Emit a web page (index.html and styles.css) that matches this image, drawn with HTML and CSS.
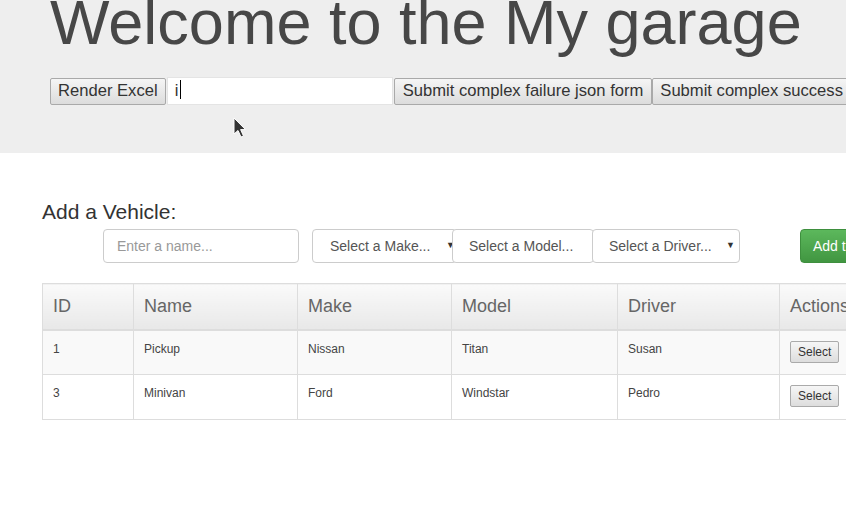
FILE: index.html
```html
<!DOCTYPE html>
<html>
<head>
<meta charset="utf-8">
<link rel="stylesheet" href="styles.css">
</head>
<body>
<div class="page">
  <header class="jumbotron">
    <h1 class="title">Welcome to the My garage</h1>
    <div class="toolbar">
      <button class="btn-plain">Render Excel</button>
      <div class="text-input">i<span class="caret"></span></div>
      <button class="btn-plain wide">Submit complex failure json form</button>
      <button class="btn-plain">Submit complex success json form</button>
    </div>
    <svg class="cursor" width="14" height="22" viewBox="0 0 14 22">
      <path d="M1 1 L1 17 L5 13.5 L8 20 L10.5 19 L7.6 12.6 L12.5 12.6 Z" fill="#333" stroke="#fff" stroke-width="1"/>
    </svg>
  </header>

  <section class="content">
    <h3 class="section-title">Add a Vehicle:</h3>
    <div class="vehicle-form">
      <div class="field name-field">Enter a name...</div>
      <div class="field select make">Select a Make...<span class="arrow">▼</span></div>
      <div class="field select model">Select a Model...</div>
      <div class="field select driver">Select a Driver...<span class="arrow">▼</span></div>
      <button class="btn-success">Add to Garage</button>
    </div>

    <table class="vehicles">
      <thead>
        <tr>
          <th class="c-id">ID</th>
          <th class="c-name">Name</th>
          <th class="c-make">Make</th>
          <th class="c-model">Model</th>
          <th class="c-driver">Driver</th>
          <th class="c-actions">Actions</th>
        </tr>
      </thead>
      <tbody>
        <tr class="odd">
          <td>1</td><td>Pickup</td><td>Nissan</td><td>Titan</td><td>Susan</td>
          <td><button class="btn-xs">Select</button></td>
        </tr>
        <tr>
          <td>3</td><td>Minivan</td><td>Ford</td><td>Windstar</td><td>Pedro</td>
          <td><button class="btn-xs">Select</button></td>
        </tr>
      </tbody>
    </table>
  </section>
</div>
</body>
</html>
```

FILE: styles.css
```css
html, body {
  margin: 0;
  padding: 0;
  background: #fff;
  overflow: hidden;
}
body {
  font-family: "Liberation Sans", Arial, sans-serif;
  color: #333;
  width: 846px;
  height: 516px;
}
.page {
  width: 1100px;
}
.jumbotron {
  position: relative;
  background: #eeeeee;
  height: 153px;
  padding-left: 50px;
  box-sizing: border-box;
}
.title {
  margin: 0;
  padding-top: 0;
  position: relative;
  top: -12px;
  font-size: 63px;
  font-weight: 400;
  line-height: 69px;
  color: #474747;
  white-space: nowrap;
}
.toolbar {
  display: flex;
  align-items: center;
  margin-top: 8px;
  height: 28px;
}
.btn-plain {
  font-family: "Liberation Sans", Arial, sans-serif;
  font-size: 16.6px;
  color: #333;
  height: 27px;
  padding: 0 7px;
  border: 1px solid #a9a9a9;
  border-radius: 2px;
  background: linear-gradient(#f5f5f5, #dcdcdc);
  white-space: nowrap;
  margin: 0;
}
.btn-plain.wide {
  padding: 0 8px;
}
.text-input {
  width: 226px;
  height: 28px;
  box-sizing: border-box;
  background: #fff;
  border: 1px solid #e4e4e4;
  font-size: 16.6px;
  line-height: 26px;
  padding-left: 7px;
  margin: 0 1px;
  color: #333;
}
.caret {
  display: inline-block;
  width: 1px;
  height: 19px;
  background: #000;
  vertical-align: -3px;
  margin-left: 2px;
}
.cursor {
  position: absolute;
  left: 233px;
  top: 117px;
}
.content {
  padding-left: 42px;
}
.section-title {
  margin: 0;
  padding-top: 47px;
  font-size: 21px;
  font-weight: 400;
  line-height: 23px;
  color: #333;
}
.vehicle-form {
  display: flex;
  align-items: center;
  margin-top: 6px;
  padding-left: 61px;
  height: 34px;
}
.field {
  box-sizing: border-box;
  height: 34px;
  border: 1px solid #ccc;
  border-radius: 4px;
  background: #fff;
  font-size: 14px;
  line-height: 32px;
  color: #555;
  position: relative;
  white-space: nowrap;
}
.name-field {
  width: 196px;
  padding-left: 13px;
  color: #999;
}
.select {
  padding-left: 17px;
}
.make {
  width: 145px;
  margin-left: 13px;
}
.model {
  width: 142px;
  margin-left: -5px;
  padding-left: 16px;
}
.driver {
  width: 148px;
  margin-left: -2px;
  padding-left: 16px;
}
.arrow {
  position: absolute;
  font-size: 9px;
  top: 0;
  line-height: 31px;
  color: #333;
}
.make .arrow { right: 1px; }
.driver .arrow { right: 4px; }
.btn-success {
  margin-left: 60px;
  height: 34px;
  padding: 0 12px;
  font-family: "Liberation Sans", Arial, sans-serif;
  font-size: 14px;
  color: #fff;
  border: 1px solid #3e8f3e;
  border-radius: 4px;
  background: linear-gradient(#5cb85c, #419641);
  white-space: nowrap;
}
.vehicles {
  margin-top: 20px;
  border-collapse: collapse;
  border: 1px solid #ddd;
  width: 1000px;
  table-layout: fixed;
}
.vehicles th, .vehicles td {
  border: 1px solid #ddd;
  text-align: left;
  vertical-align: top;
}
.vehicles th {
  font-size: 18px;
  font-weight: 400;
  color: #666;
  height: 46px;
  padding: 0 10px;
  box-sizing: border-box;
  line-height: 44px;
  border-bottom: 2px solid #ddd;
  background: linear-gradient(#fafafa, #e8e8e8);
}
.c-id { width: 91px; }
.c-name { width: 164px; }
.c-make { width: 154px; }
.c-model { width: 166px; }
.c-driver { width: 162px; }
.vehicles td {
  font-size: 12px;
  color: #444;
  height: 45px;
  box-sizing: border-box;
  padding: 10px 10px 0;
  line-height: 17px;
}
.vehicles tr.odd td {
  background: #f9f9f9;
}
.btn-xs {
  font-family: "Liberation Sans", Arial, sans-serif;
  font-size: 12px;
  color: #333;
  height: 22px;
  padding: 0 7px;
  border: 1px solid #aaa;
  border-radius: 2px;
  background: linear-gradient(#f6f6f6, #dddddd);
  margin-top: 0;
}
```
